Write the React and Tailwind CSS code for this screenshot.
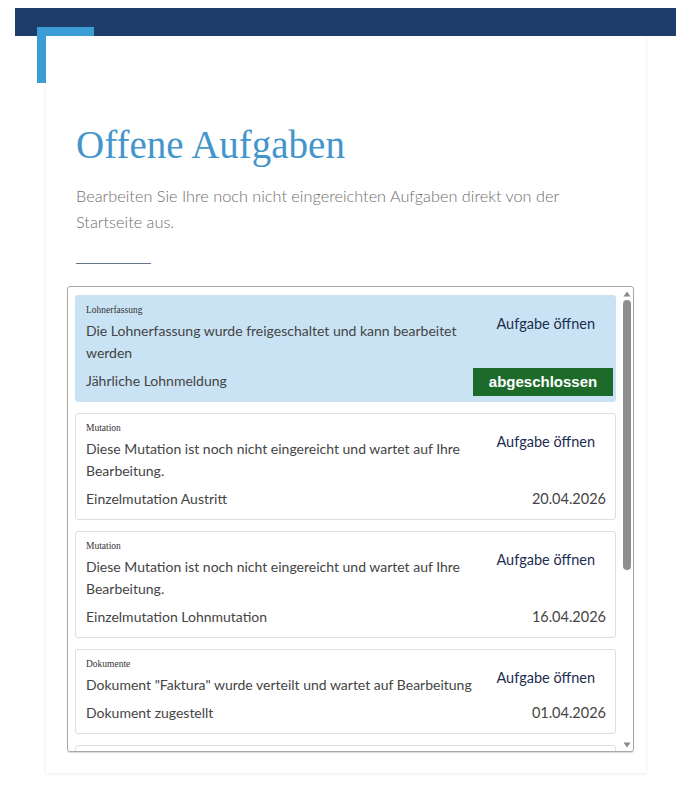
const tasks = [
  {
    id: 1,
    category: 'Lohnerfassung',
    text: 'Die Lohnerfassung wurde freigeschaltet und kann bearbeitet werden',
    sub: 'Jährliche Lohnmeldung',
    done: true,
  },
  {
    id: 2,
    category: 'Mutation',
    text: 'Diese Mutation ist noch nicht eingereicht und wartet auf Ihre Bearbeitung.',
    sub: 'Einzelmutation Austritt',
    date: '20.04.2026',
  },
  {
    id: 3,
    category: 'Mutation',
    text: 'Diese Mutation ist noch nicht eingereicht und wartet auf Ihre Bearbeitung.',
    sub: 'Einzelmutation Lohnmutation',
    date: '16.04.2026',
  },
  {
    id: 4,
    category: 'Dokumente',
    text: 'Dokument "Faktura" wurde verteilt und wartet auf Bearbeitung',
    sub: 'Dokument zugestellt',
    date: '01.04.2026',
  },
  {
    id: 5,
    category: 'Dokumente',
    text: 'Dokument "Lohnausweis" wurde verteilt und wartet auf Bearbeitung',
    sub: 'Dokument zugestellt',
    date: '28.03.2026',
  },
];

function TaskItem({ task }) {
  return (
    <div
      className={`flex shrink-0 rounded-[3px] border ${
        task.done ? 'bg-[#c9e3f4] border-[#c9e3f4]' : 'bg-white border-[#dedede]'
      }`}
    >
      <div className="flex-1 min-w-0 pl-[10px] pt-[8px] pb-[9px] pr-[4px]">
        <div className="text-[9.5px] leading-[12px] text-[#333] font-['Liberation_Serif',serif]">
          {task.category}
        </div>
        <p className="mt-[4px] text-[14px] leading-[22px] text-[#444]">{task.text}</p>
        <div className="mt-[6px] text-[14px] leading-[22px] text-[#444]">{task.sub}</div>
      </div>
      <div className="w-[136px] shrink-0 flex flex-col items-end justify-between pt-[17px] pb-[9px] pr-[2px]">
        <a href="#" className="mr-[18px] text-[14.5px] leading-[22px] text-[#1d2d50]">
          Aufgabe öffnen
        </a>
        {task.done ? (
          <span className="-mb-[4px] w-[140px] shrink-0 h-[28px] flex items-center justify-center bg-[#1d6b2b] text-white text-[15px] font-bold font-['Liberation_Sans',sans-serif]">
            abgeschlossen
          </span>
        ) : (
          <span className="mr-[7px] text-[14.5px] leading-[22px] text-[#444]">{task.date}</span>
        )}
      </div>
    </div>
  );
}

export default function App() {
  return (
    <div className="min-h-[791px] bg-white pt-[8px] font-['Lato',sans-serif]">
      <div className="ml-[15px] h-[28px] bg-[#1e3d6b]" />
      <div className="relative ml-[46px] mr-[30px] bg-white shadow-[0_1px_4px_rgba(0,0,0,0.08)] px-[30px] pt-[84px] pb-[21px]">
        {/* corner accent */}
        <div className="absolute -left-[9px] -top-[9px] w-[57px] h-[56px] border-l-[9px] border-t-[9px] border-[#3c9cd6]" />
        <h1 className="text-[39px] leading-[50px] text-[#4495cb] font-['Liberation_Serif',serif]">
          Offene Aufgaben
        </h1>
        <p className="mt-[13px] text-[16.3px] leading-[26px] text-[#6e6e6e] font-light">
          Bearbeiten Sie Ihre noch nicht eingereichten Aufgaben direkt von der Startseite aus.
        </p>
        <div className="mt-[28px] w-[75px] h-px bg-[#62768f]" />

        <div className="mt-[22px] -ml-[9px] -mr-[18px] h-[466px] flex rounded-[3px] border border-[#a8a8a8] shadow-[0_1px_1px_rgba(0,0,0,0.15)] overflow-hidden">
          <div className="flex-1 min-w-0 flex flex-col gap-[11px] overflow-hidden pt-[8px] pl-[7px] pr-[4px]">
            {tasks.map(task => (
              <TaskItem key={task.id} task={task} />
            ))}
          </div>
          {/* scrollbar */}
          <div className="w-[13px] shrink-0 flex flex-col items-center pt-[3px] pb-[3px]">
            <svg width="8" height="6" viewBox="0 0 8 6" className="mt-[1px]">
              <path d="M4 0.5 L7.5 5.5 L0.5 5.5 Z" fill="#8a8a8a" />
            </svg>
            <div className="mt-[3px] w-[8px] h-[270px] rounded-full bg-[#8e8e8e]" />
            <div className="flex-1" />
            <svg width="8" height="6" viewBox="0 0 8 6">
              <path d="M0.5 0.5 L7.5 0.5 L4 5.5 Z" fill="#8a8a8a" />
            </svg>
          </div>
        </div>
      </div>
    </div>
  );
}
